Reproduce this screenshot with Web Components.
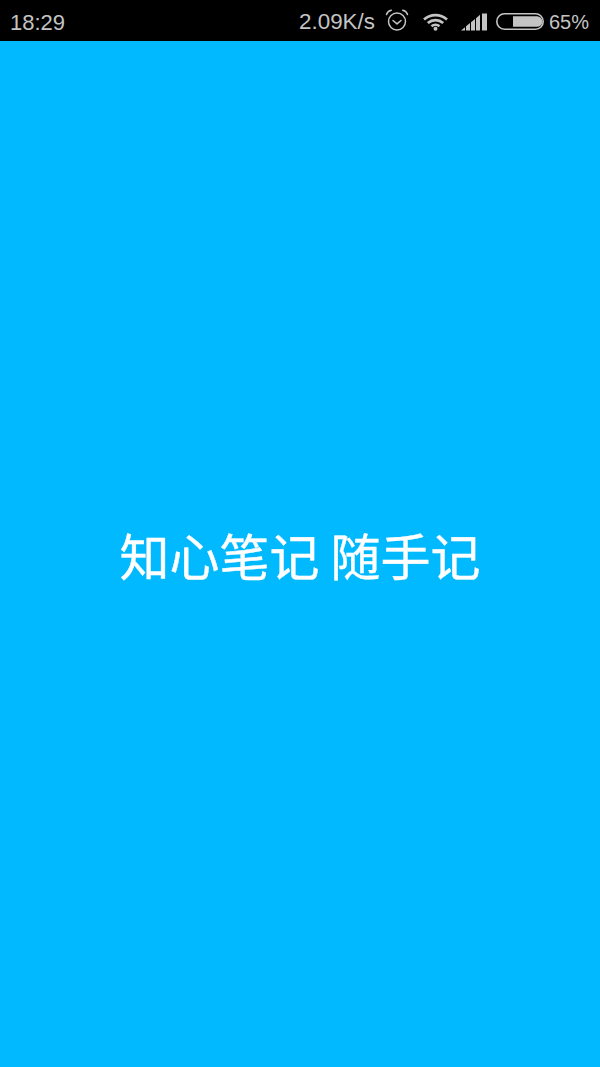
<!DOCTYPE html>
<html lang="zh-CN"><head><meta charset="utf-8">
<style>html,body{margin:0;height:100%;background:#00b9ff}body{display:flex;flex-direction:column;height:1067px;overflow:hidden}</style>
</head><body>
<status-bar time="18:29" speed="2.09K/s" battery="65%"></status-bar>
<splash-screen>知心笔记 随手记</splash-screen>
<script>
class StatusBar extends HTMLElement{
  constructor(){super();this.attachShadow({mode:'open'})}
  connectedCallback(){
    const a=n=>this.getAttribute(n);
    this.shadowRoot.innerHTML=`<style>
:host{display:flex;flex:none;height:41px;background:#000;color:#c4c4c4;align-items:center;justify-content:space-between;padding:4px 11px 0 10px;box-sizing:border-box;font:22px/1 "Liberation Sans",Arial,sans-serif}
.r{display:flex;align-items:center}
svg{display:block;flex:none}
.sp{font-size:22.4px}
.pc{font-size:20px;margin-top:-1px}
.alarm{margin:-5px 14px 0 10px}.wifi{margin:-2px 13px 0 0}.sig{margin:-2px 9px 0 0}.bat{margin:-3px 5px 0 0}
</style>
<span>${a('time')}</span>
<div class="r"><span class="sp">${a('speed')}</span>
<svg class="alarm" width="24" height="22" viewBox="0 0 24 22" fill="none" stroke="#c4c4c4" stroke-width="1.5"><circle cx="12" cy="12.500" r="8.500"/><path d="M8 11.500l4 3.400 4-3.400" stroke-linecap="round" stroke-linejoin="round"/><path d="M1.500 5.500C2.300 3 3.800 1.700 6.300 1.200M22.500 5.500C21.700 3 20.200 1.700 17.700 1.200" stroke-linecap="round"/></svg>
<svg class="wifi" width="25" height="18" viewBox="0 0 25 18" fill="none" stroke="#c4c4c4" stroke-width="2.700"><path d="M1 6.500C7.500 .6 17.500 .6 24 6.500"/><path d="M4.800 10C9.300 6.200 15.700 6.200 20.200 10"/><path d="M8.500 13.300C10.800 11.400 14.200 11.400 16.500 13.300"/><circle cx="12.500" cy="15.800" r="2" fill="#c4c4c4" stroke="none"/></svg>
<svg class="sig" width="26" height="18" viewBox="0 0 26 18" fill="#c4c4c4"><path d="M0 17.500l4-3.300v3.300zM5 17.500v-4.200l4-3.300v7.500zM10 17.500V9.200l4-3.300v11.600zM15 17.500V5.200l4-3.400v15.700zM21 17.500V.500h5v17z"/></svg>
<svg class="bat" width="48" height="17" viewBox="0 0 48 17" fill="none"><rect x=".8" y=".8" width="46.400" height="15.400" rx="7.700" stroke="#c4c4c4" stroke-width="1.600"/><path d="M17 3.200h24a5.300 5.300 0 0 1 0 10.600H17z" fill="#c4c4c4"/></svg>
<span class="pc">${a('battery')}</span></div>`;
  }
}
customElements.define('status-bar',StatusBar);
class SplashScreen extends HTMLElement{
  constructor(){super();this.attachShadow({mode:'open'}).innerHTML=`<style>
:host{display:flex;flex:1;justify-content:center;background:#00b9ff;color:#fff;padding-top:481px;box-sizing:border-box;font:400 50px/1.3 "Noto Sans CJK SC",sans-serif;-webkit-text-stroke:.4px #fff}
span{display:block;height:max-content}
</style><span><slot></slot></span>`}
}
customElements.define('splash-screen',SplashScreen);
</script>
</body></html>
